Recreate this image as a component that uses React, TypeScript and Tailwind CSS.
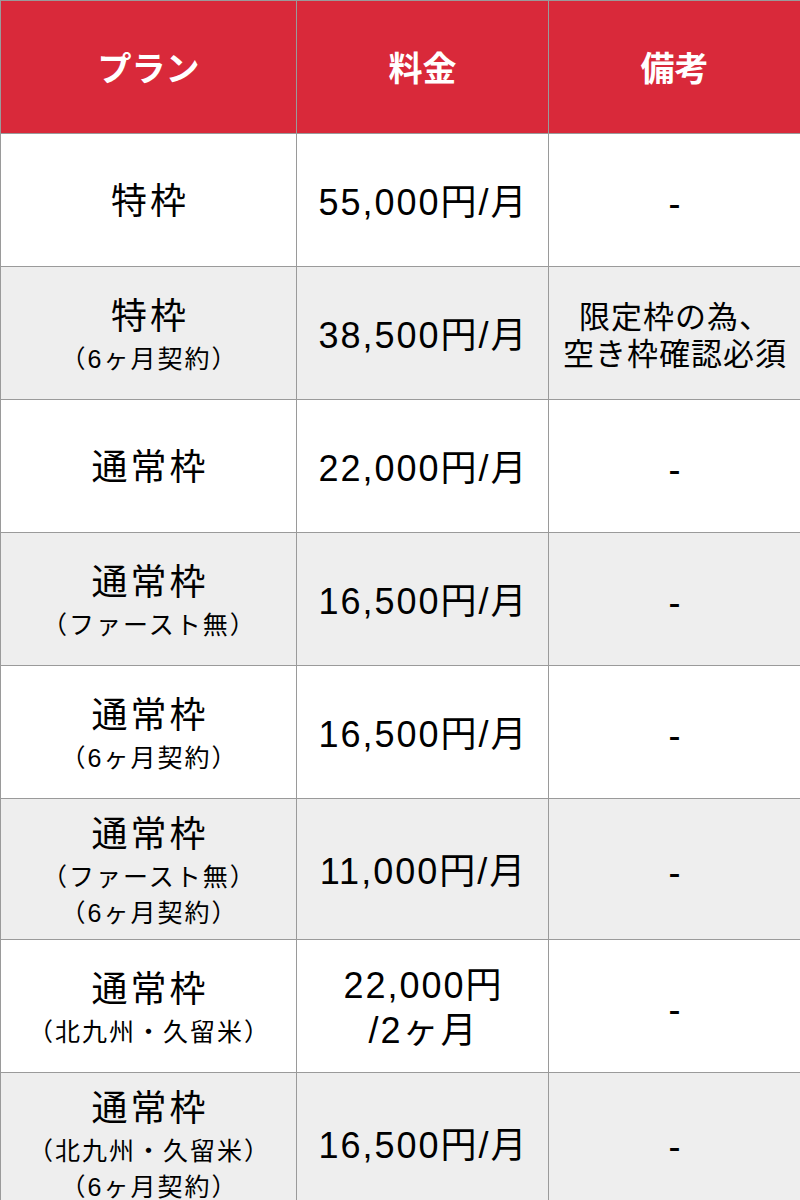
import React from "react";

type Row = { plan: string[]; price: string[]; note: string[] };

const rows: Row[] = [
  { plan: ["特枠"], price: ["55,000円/月"], note: ["-"] },
  { plan: ["特枠", "（6ヶ月契約）"], price: ["38,500円/月"], note: ["限定枠の為、", "空き枠確認必須"] },
  { plan: ["通常枠"], price: ["22,000円/月"], note: ["-"] },
  { plan: ["通常枠", "（ファースト無）"], price: ["16,500円/月"], note: ["-"] },
  { plan: ["通常枠", "（6ヶ月契約）"], price: ["16,500円/月"], note: ["-"] },
  { plan: ["通常枠", "（ファースト無）", "（6ヶ月契約）"], price: ["11,000円/月"], note: ["-"] },
  { plan: ["通常枠", "（北九州・久留米）"], price: ["22,000円", "/2ヶ月"], note: ["-"] },
  { plan: ["通常枠", "（北九州・久留米）", "（6ヶ月契約）"], price: ["16,500円/月"], note: ["-"] },
];

export default function App() {
  return (
    <div
      className="w-[800px] bg-white text-black"
      style={{ fontFamily: '"Liberation Sans", "Noto Sans CJK JP", sans-serif' }}
    >
      <table className="w-[800px] table-fixed border-collapse">
        <colgroup>
          <col className="w-[296px]" />
          <col className="w-[252px]" />
          <col className="w-[252px]" />
        </colgroup>
        <thead>
          <tr className="h-[133px] bg-[#d9293a] text-white">
            {["プラン", "料金", "備考"].map((h) => (
              <th
                key={h}
                className="border border-[#9a9a9a] text-center align-middle text-[34px] font-bold leading-[40px]"
                style={{ fontFamily: '"Noto Sans CJK JP", sans-serif' }}
              >
                {h}
              </th>
            ))}
          </tr>
        </thead>
        <tbody>
          {rows.map((r, i) => (
            <tr key={i} className={i % 2 === 1 ? "bg-[#eeeeee]" : "bg-white"}>
              <td className="h-[133px] border border-[#9a9a9a] pt-[12px] pb-[8px] text-center align-middle">
                {r.plan.map((t, j) =>
                  j === 0 ? (
                    <div key={j} className="pl-[3px] text-[36px] leading-[48px] tracking-[3px]">
                      {t}
                    </div>
                  ) : (
                    <div key={j} className="pl-[2px] text-[25px] leading-[36px] tracking-[2px]">
                      {t}
                    </div>
                  )
                )}
              </td>
              <td className="border border-[#9a9a9a] pt-[4px] text-center align-middle">
                {r.price.map((t, j) => (
                  <div key={j} className="pl-[2px] text-[36px] leading-[45px] tracking-[2px]">
                    {t}
                  </div>
                ))}
              </td>
              <td className="border border-[#9a9a9a] pt-[6px] text-center align-middle">
                {r.note.map((t, j) => (
                  <div
                    key={j}
                    className={
                      r.note.length > 1
                        ? "pl-[1px] text-[31px] leading-[37px] tracking-[1px]"
                        : "text-[36px] leading-[45px]"
                    }
                  >
                    {t}
                  </div>
                ))}
              </td>
            </tr>
          ))}
        </tbody>
      </table>
    </div>
  );
}
